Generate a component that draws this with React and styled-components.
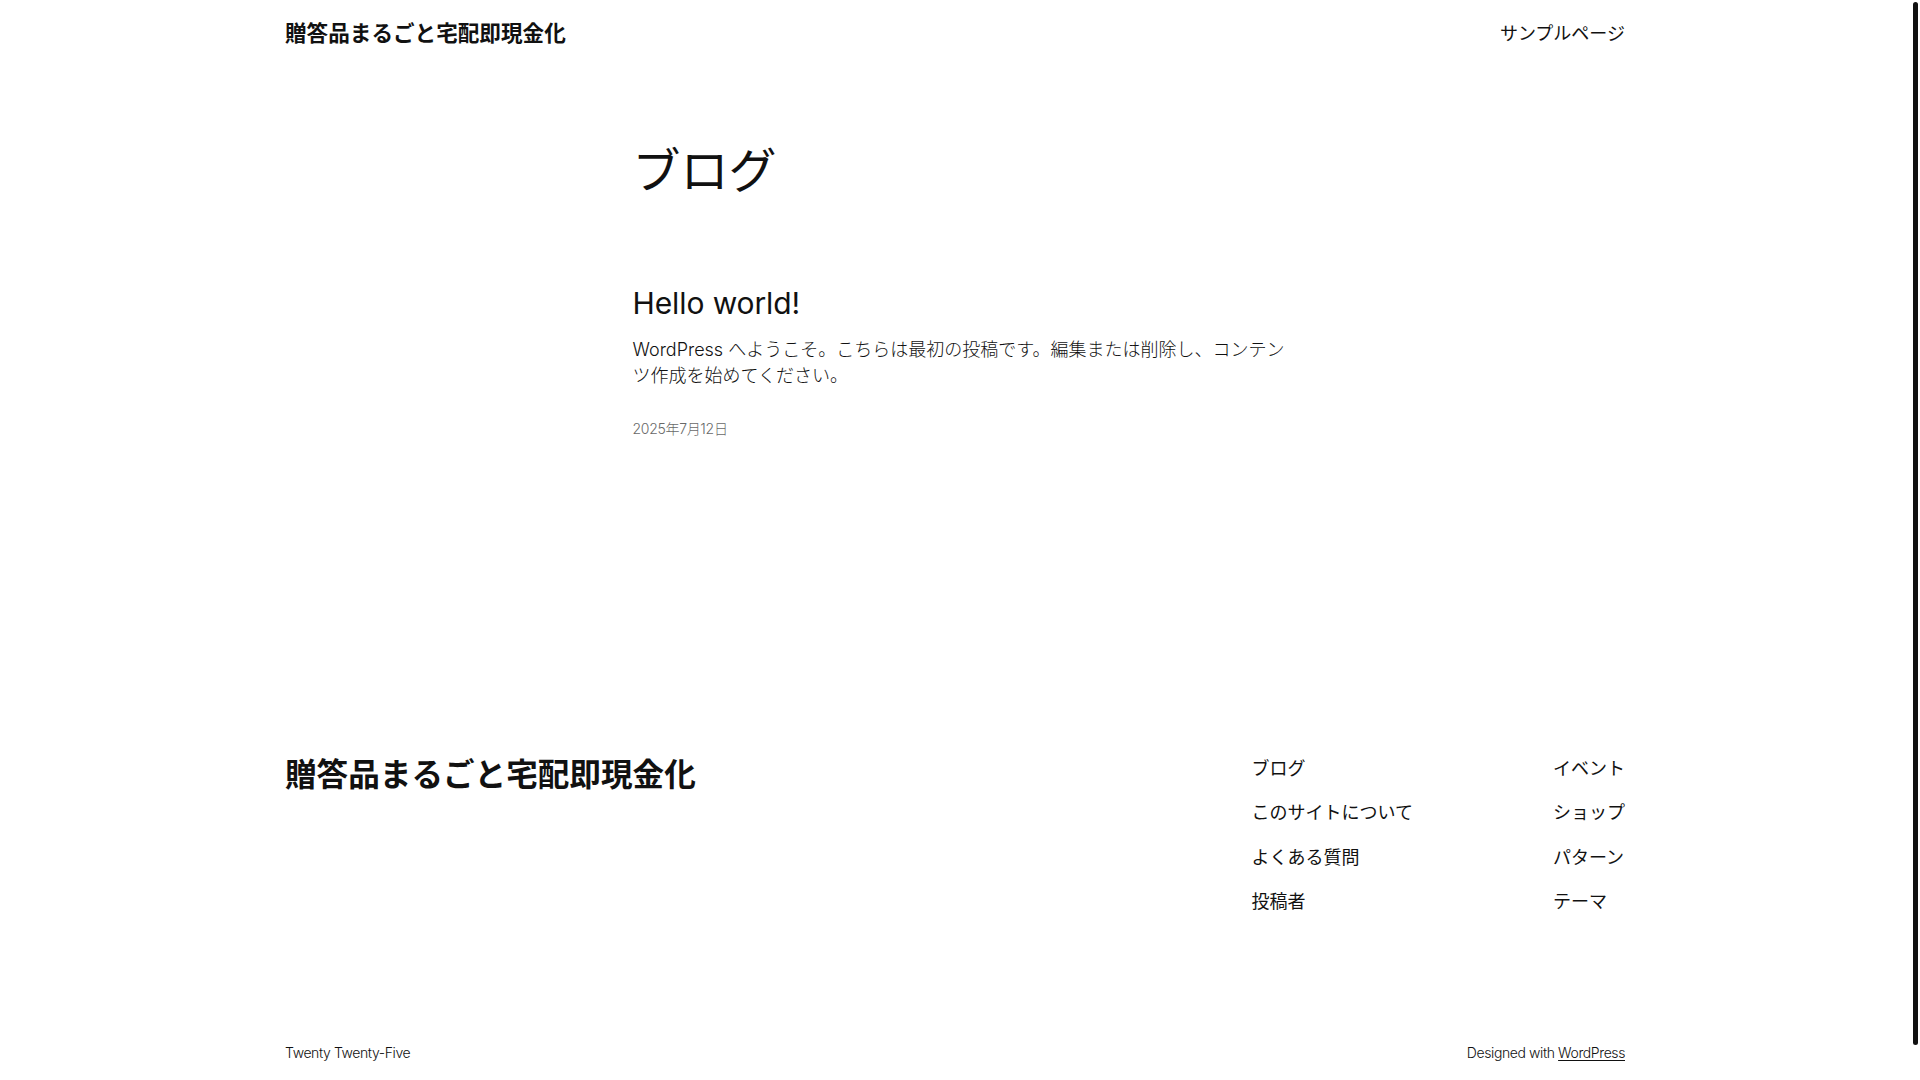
import React from "react"
import styled, { createGlobalStyle } from "styled-components"

const GlobalStyle = createGlobalStyle`
  body {
    margin: 0;
    width: calc(100% - 10px);
    background: #fff;
    color: #111;
    font-family: Inter, "Noto Sans CJK JP", sans-serif;
    font-weight: 300;
    -webkit-font-smoothing: antialiased;
  }
  a {
    color: inherit;
    text-decoration: none;
  }
`

const ScrollThumb = styled.div`
  position: fixed;
  top: 2px;
  right: 2px;
  width: 5px;
  height: 1043px;
  border-radius: 3px;
  background: #111;
`

const Page = styled.div`
  min-height: 1118px;
  display: flex;
  flex-direction: column;
`

const Wide = styled.div`
  width: 1340px;
  margin: 0 auto;
`

const Header = styled(Wide)`
  height: 68px;
  display: flex;
  justify-content: space-between;
  align-items: center;
`

const SiteTitle = styled.a`
  font-size: ${(p) => (p.$big ? "31.6px" : "21.6px")};
  font-weight: 700;
  line-height: 1.2;
`

const NavLink = styled.a`
  font-size: 18px;
  font-weight: 400;
  line-height: 1.4;
`

const Main = styled.main`
  width: 645px;
  margin: 0 auto;
  padding-top: 74px;
`

const PageTitle = styled.h1`
  margin: 0;
  font-size: 48px;
  font-weight: 400;
  line-height: 1.2;
`

const Post = styled.article`
  margin-top: 85px;
`

const PostTitle = styled.h2`
  margin: 0;
  font-size: 30px;
  font-weight: 400;
  line-height: 1.2;
  letter-spacing: -0.1px;
`

const Excerpt = styled.p`
  margin: 16px -8px 0 0;
  font-size: 18px;
  line-height: 26px;
`

const PostDate = styled.time`
  display: block;
  margin-top: 30px;
  font-size: 14px;
  line-height: 20px;
  letter-spacing: -0.3px;
  color: #686868;
`

const Footer = styled.footer`
  margin-top: auto;
  padding-bottom: 55px;
`

const FooterTop = styled(Wide)`
  display: flex;
  justify-content: space-between;
  align-items: flex-start;
`

const FooterNavs = styled.div`
  display: flex;
  gap: 140px;
`

const NavColumn = styled.nav`
  display: flex;
  flex-direction: column;
  gap: 19px;
`

const FooterBottom = styled(Wide)`
  margin-top: 129px;
  display: flex;
  justify-content: space-between;
  font-size: 14px;
  line-height: 20px;
  letter-spacing: -0.4px;
`

const Underlined = styled.a`
  text-decoration: underline;
  text-underline-offset: 2px;
`

const colA = ["ブログ", "このサイトについて", "よくある質問", "投稿者"]
const colB = ["イベント", "ショップ", "パターン", "テーマ"]

export default function App() {
  return (
    <Page>
      <GlobalStyle />
      <ScrollThumb />
      <Header as="header">
        <SiteTitle href="#">贈答品まるごと宅配即現金化</SiteTitle>
        <NavLink href="#">サンプルページ</NavLink>
      </Header>
      <Main>
        <PageTitle>ブログ</PageTitle>
        <Post>
          <PostTitle>Hello world!</PostTitle>
          <Excerpt>
            WordPress へようこそ。こちらは最初の投稿です。編集または削除し、コンテンツ作成を始めてください。
          </Excerpt>
          <PostDate>2025年7月12日</PostDate>
        </Post>
      </Main>
      <Footer>
        <FooterTop>
          <SiteTitle $big href="#">
            贈答品まるごと宅配即現金化
          </SiteTitle>
          <FooterNavs>
            <NavColumn>
              {colA.map((t) => (
                <NavLink key={t} href="#">
                  {t}
                </NavLink>
              ))}
            </NavColumn>
            <NavColumn>
              {colB.map((t) => (
                <NavLink key={t} href="#">
                  {t}
                </NavLink>
              ))}
            </NavColumn>
          </FooterNavs>
        </FooterTop>
        <FooterBottom>
          <span>Twenty Twenty-Five</span>
          <span>
            Designed with <Underlined href="#">WordPress</Underlined>
          </span>
        </FooterBottom>
      </Footer>
    </Page>
  )
}
